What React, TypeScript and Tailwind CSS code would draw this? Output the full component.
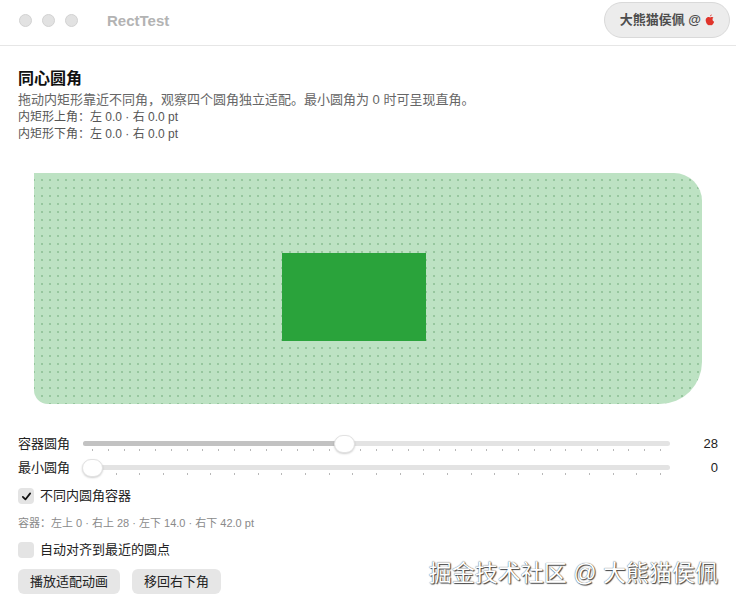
import React from "react";

const FONT = '"Liberation Sans", "Noto Sans CJK SC", sans-serif';

function Slider({ label, value, frac, ticks }: { label: string; value: string; frac: number; ticks: number }) {
  const start = 9;
  const end = 577;
  const thumbX = start + (end - start) * frac;
  const tickArr = Array.from({ length: ticks }, (_, i) => start + ((end - start) * i) / (ticks - 1));
  return (
    <div className="flex items-center h-[20px]">
      <div className="w-[65px] text-[13px] text-[#222]">{label}</div>
      <div className="relative flex-1 h-[20px]">
        <div className="absolute left-0 right-0 top-[7px] h-[5px] rounded-full bg-[#e3e3e3]" />
        <div className="absolute left-0 top-[7px] h-[5px] rounded-full bg-[#c2c2c2]" style={{ width: thumbX }} />
        {tickArr.map((x, i) => (
          <div key={i} className="absolute top-[15px] w-[1px] h-[2px] bg-[#b8b8b8]" style={{ left: x }} />
        ))}
        <div
          className="absolute top-[1px] w-[21px] h-[18px] rounded-full bg-white border border-[#e2e2e2] shadow-[0_1px_2px_rgba(0,0,0,0.18)]"
          style={{ left: thumbX - 10.5 }}
        />
      </div>
      <div className="w-[48px] text-right text-[13px] text-[#222]">{value}</div>
    </div>
  );
}

function Check({ checked, label }: { checked: boolean; label: string }) {
  return (
    <div className="flex items-center h-[18px] gap-[6px]">
      <div className="w-[16px] h-[16px] rounded-[4px] bg-[#e4e4e4] flex items-center justify-center">
        {checked && (
          <svg width="11" height="11" viewBox="0 0 12 12">
            <path d="M2 6.4 L4.8 9.2 L10 2.6" fill="none" stroke="#111" strokeWidth="1.9" strokeLinecap="round" strokeLinejoin="round" />
          </svg>
        )}
      </div>
      <div className="text-[13px] text-[#222]">{label}</div>
    </div>
  );
}

export default function App() {
  return (
    <div className="relative w-[736px] h-[604px] bg-white overflow-hidden" style={{ fontFamily: FONT }}>
      {/* title bar */}
      <div className="flex items-start h-[46px] border-b border-[#e6e6e6]">
        <div className="flex items-center gap-[10px] ml-[19px] mt-[14px]">
          <div className="w-[13px] h-[13px] rounded-full bg-[#e2e2e2] border border-[#d2d2d2]" />
          <div className="w-[13px] h-[13px] rounded-full bg-[#e2e2e2] border border-[#d2d2d2]" />
          <div className="w-[13px] h-[13px] rounded-full bg-[#e2e2e2] border border-[#d2d2d2]" />
        </div>
        <div className="ml-[29px] mt-[10px] text-[15px] font-semibold text-[#b3b3b3]">RectTest</div>
        <div className="ml-auto mr-[6px] mt-[2px] h-[36px] pl-[15px] pr-[14px] rounded-full bg-[#ececec] border border-[#d9d9d9] flex items-center gap-[4px]">
          <span className="text-[13px] font-bold text-[#4d4d4d]">大熊猫侯佩 @</span>
          <svg width="10" height="12" viewBox="0 0 20 24">
            <path d="M14 1 C13 3 11.5 4.5 10 4.6 C10 3 11.5 1.3 14 1 Z" fill="#e0342b" />
            <path d="M10 7 C8.5 6 6.5 5.8 5 6.4 C2 7.6 0.8 11 1.6 14.6 C2.4 18.4 5 22.5 7.4 22.6 C8.6 22.6 9 21.8 10 21.8 C11 21.8 11.4 22.6 12.6 22.6 C15 22.5 17.4 18.6 18.3 15.6 C16 14.6 15 12.6 15 10.6 C15 8.8 16 7.6 17 7 C15.8 5.6 13.6 5.6 12.6 6.2 C11.6 6.8 10.8 7 10 7 Z" fill="#e0342b" />
          </svg>
        </div>
      </div>

      {/* content */}
      <div className="flex flex-col px-[18px]">
        <div className="mt-[22px] text-[16px] leading-[22px] font-bold text-[#111]">同心圆角</div>
        <div className="mt-[1px] text-[13px] leading-[18px] text-[#666]">
          拖动内矩形靠近不同角，观察四个圆角独立适配。最小圆角为 0 时可呈现直角。
        </div>
        <div className="text-[12px] leading-[16px] text-[#555]">内矩形上角：左 0.0 · 右 0.0 pt</div>
        <div className="mt-[1px] text-[12px] leading-[16px] text-[#555]">内矩形下角：左 0.0 · 右 0.0 pt</div>

        {/* canvas */}
        <div className="mt-[31px] mx-[16px] h-[231px] relative overflow-hidden rounded-tl-none rounded-tr-[28px] rounded-br-[42px] rounded-bl-[14px] bg-[#bde2c3] bg-[radial-gradient(circle_at_4px_4px,rgba(120,175,128,0.55)_0.8px,transparent_1.2px)] bg-[size:8px_8px] bg-[position:4px_3px]">
          <div className="absolute left-[248px] top-[80px] w-[144px] h-[88px] bg-[#2aa33b]" />
        </div>

        {/* sliders */}
        <div className="mt-[30px] flex flex-col gap-[4px]">
          <Slider label="容器圆角" value="28" frac={0.4437} ticks={37} />
          <Slider label="最小圆角" value="0" frac={0} ticks={25} />
        </div>

        <div className="mt-[9px]">
          <Check checked label="不同内圆角容器" />
        </div>
        <div className="mt-[11px] text-[11px] leading-[14px] text-[#8a8a8a]">
          容器：左上 0 · 右上 28 · 左下 14.0 · 右下 42.0 pt
        </div>
        <div className="mt-[11px]">
          <Check checked={false} label="自动对齐到最近的圆点" />
        </div>
        <div className="mt-[10px] flex gap-[12px]">
          <div className="h-[25px] px-[12px] rounded-[6px] bg-[#e6e6e6] flex items-center text-[13px] text-[#222]">播放适配动画</div>
          <div className="h-[25px] px-[12px] rounded-[6px] bg-[#e6e6e6] flex items-center text-[13px] text-[#222]">移回右下角</div>
        </div>
      </div>

      {/* watermark */}
      <div className="absolute right-[18px] top-[558px] text-[23px] leading-[30px] text-white [text-shadow:0_0_1px_#333,1px_1px_1px_#444]">
        掘金技术社区 @ 大熊猫侯佩
      </div>
    </div>
  );
}
